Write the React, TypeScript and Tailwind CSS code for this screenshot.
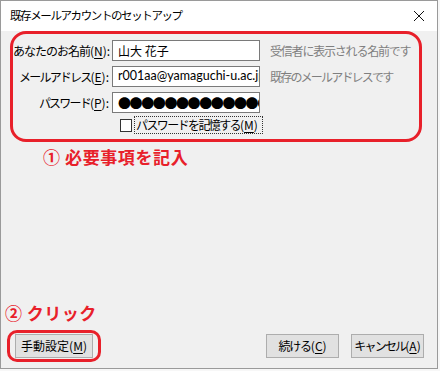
import React from 'react';

const font = "font-['Noto_Sans_CJK_JP',sans-serif]";

// mnemonic letter, underlined like a Windows dialog
const Key = ({ k }: { k: string }) => (
  <span className="tracking-normal">
    (<span className="underline underline-offset-[2px]">{k}</span>)
  </span>
);

const Row = ({ label, k, track, children, hint, hintTrack }: {
  label: string; k: string; track: string; children: React.ReactNode; hint?: string; hintTrack?: string;
}) => (
  <div className="flex items-center h-[21px]">
    <div className="w-[99px] shrink-0 text-right pr-[3px] whitespace-nowrap">
      <span className={track}>{label}</span>
      <Key k={k} />:
    </div>
    <div className="w-[148px] shrink-0 h-[21px] bg-white border border-[#7a7a7a] flex items-center overflow-hidden pl-[5px]">
      {children}
    </div>
    {hint && <div className={`ml-[10px] text-[#7f7f7f] whitespace-nowrap ${hintTrack}`}>{hint}</div>}
  </div>
);

const Button = ({ label, k, w, track }: { label: string; k: string; w: string; track: string }) => (
  <button className={`${w} h-[24px] bg-[#e1e1e1] border border-[#adadad] text-[12px] text-black leading-none whitespace-nowrap flex items-center justify-center`}>
    <span className={track}>{label}</span>
    <Key k={k} />
  </button>
);

export default function App() {
  return (
    <div className={`w-[440px] h-[371px] bg-[#f7f7f7] ${font} text-[12px] leading-none text-black`}>
      <div className="w-[438px] h-[369px] border border-[#9a9a9a] bg-[#f0f0f0] flex flex-col">
        {/* Title bar */}
        <div className="h-[30px] bg-white flex items-center justify-between pl-[9px] pr-[6px] shrink-0">
          <span className="text-[11.5px] tracking-[-1.4px]">既存メールアカウントのセットアップ</span>
          <svg width="12" height="12" viewBox="0 0 12 12" className="mr-[6px]">
            <path d="M1 1 L11 11 M11 1 L1 11" stroke="#111" strokeWidth="1" />
          </svg>
        </div>

        {/* Fields, circled in red */}
        <div className="ml-[9px] w-[412px] h-[111px] border-[3px] border-[#e8202a] rounded-[16px] pt-[6px] flex flex-col gap-[5px]">
          <Row label="あなたのお名前" k="N" track="tracking-[-1px]" hint="受信者に表示される名前です" hintTrack="tracking-[-1.2px]">
            <span>山大 花子</span>
          </Row>
          <Row label="メールアドレス" k="E" track="tracking-[-1.8px]" hint="既存のメールアドレスです" hintTrack="tracking-[-1.8px]">
            <span className="whitespace-nowrap font-['Lato',sans-serif] text-[12.5px]">r001aa@yamaguchi-u.ac.jp</span>
          </Row>
          <Row label="パスワード" k="P" track="tracking-[-1.8px]">
            <span className="whitespace-nowrap text-[13px] tracking-[-1.4px]">●●●●●●●●●●●●●●</span>
          </Row>
          <div className="flex items-center mt-[-2px] ml-[107px]">
            <div className="w-[12px] h-[13px] bg-white border border-[#333] mr-[2px] shrink-0" />
            <div className="h-[18px] w-[129px] border border-dotted border-[#333] flex items-center pl-[1px] whitespace-nowrap">
              <span className="tracking-[-1.6px]">パスワードを記憶する</span>
              <Key k="M" />
            </div>
          </div>
        </div>

        <div className="ml-[42px] mt-[6px] text-[17px] font-bold text-[#e8202a] tracking-[0.6px]">① 必要事項を記入</div>

        <div className="mt-auto ml-[4px] text-[17px] font-bold text-[#e8202a] tracking-[0.5px]">② クリック</div>

        {/* Buttons */}
        <div className="flex items-center justify-between mt-[9px] mb-[6px] pl-[6px] pr-[13px]">
          <div className="border-[3px] border-[#e8202a] rounded-[10px] px-[5px] py-[1px]">
            <Button label="手動設定" k="M" w="w-[78px]" track="tracking-normal" />
          </div>
          <div className="flex gap-[12px]">
            <Button label="続ける" k="C" w="w-[73px]" track="tracking-[-1.2px]" />
            <Button label="キャンセル" k="A" w="w-[73px]" track="tracking-[-1.8px]" />
          </div>
        </div>
      </div>
    </div>
  );
}
